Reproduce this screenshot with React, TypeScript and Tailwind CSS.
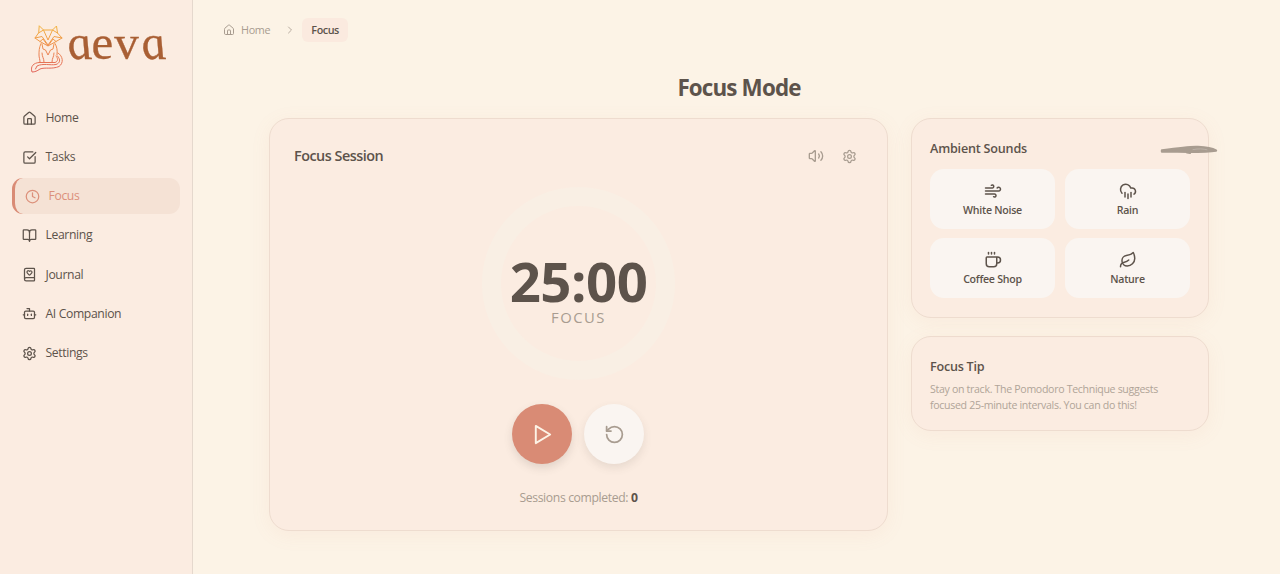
import { useState } from "react";
import {
  BookHeart,
  BookOpen,
  Bot,
  ChevronRight,
  Clock,
  CloudRain,
  Coffee,
  House,
  Leaf,
  RotateCcw,
  Settings,
  SquareCheckBig,
  Volume2,
  Wind,
} from "lucide-react";
import clsx from "clsx";

const navItems = [
  { label: "Home", icon: House },
  { label: "Tasks", icon: SquareCheckBig },
  { label: "Focus", icon: Clock },
  { label: "Learning", icon: BookOpen },
  { label: "Journal", icon: BookHeart },
  { label: "AI Companion", icon: Bot },
  { label: "Settings", icon: Settings },
];

const sounds = [
  { label: "White Noise", icon: Wind },
  { label: "Rain", icon: CloudRain },
  { label: "Coffee Shop", icon: Coffee },
  { label: "Nature", icon: Leaf },
];

function FoxLogo() {
  return (
    <svg
      viewBox="0 0 34 50"
      className="h-[50px] w-[34px] shrink-0"
      fill="none"
      stroke="url(#fox)"
      strokeWidth="1"
      strokeLinejoin="round"
      strokeLinecap="round"
    >
      <defs>
        <linearGradient id="fox" x1="0" y1="0" x2="0" y2="50" gradientUnits="userSpaceOnUse">
          <stop offset="0" stopColor="#f2b63c" />
          <stop offset="0.45" stopColor="#ee8f50" />
          <stop offset="1" stopColor="#e0605a" />
        </linearGradient>
      </defs>
      {/* head */}
      <path d="M9.5 2 L13.5 6 H22.5 L26.5 2 L27.5 9 L32 14 L26 17.5 L18 22 L10 17.5 L5 14 L8.5 9 Z" />
      <path d="M8.5 9 L13.5 6 L18 16 L22.5 6 L27.5 9" />
      <path d="M5 14 L12 12.5 L18 21 L24 12.5 L32 14" />
      <path d="M10 17.5 L13 15 L18 22 L23 15 L26 17.5" />
      {/* body */}
      <path d="M11 19.5 C9 24 9 27 9 31 C9 34 10 35 10 38 M25 19.5 C27 23 27.5 26 27 31" />
      <path d="M12 20 L13 25 L15.5 26 L18 31 L20.5 26 L23 25 L24 20" />
      <path d="M12 29 C12 33 14 34 14 38 M24 29 C24 33 22 34 22 38" />
      {/* tail */}
      <path d="M28 29 C33 32 34 39 29 42.5 C22 45.5 15 43 10 45 C7 47 5 48 2 48 C0 42 4 39 9 38.5 H25 C28.5 37.5 28 34 26 32" />
      <path d="M27.5 32 C31 36 30 39 26 40.5 C20 41.5 13 39 7 42 L5.5 45" />
    </svg>
  );
}

function Sidebar() {
  return (
    <aside className="flex w-[193px] shrink-0 flex-col border-r border-[#e5d8cd] bg-[#fbece1]">
      <div className="flex h-[100px] pl-[30px] pt-6">
        <FoxLogo />
        <div className="ml-[2px] mt-[-10px] whitespace-nowrap font-['Liberation_Serif',serif] text-[49px] leading-[57px] tracking-[1px] text-[#a95f34] [-webkit-text-stroke:0.3px_#a95f34]">
          <span className="inline-block skew-x-[15deg] italic">a</span>ev
          <span className="inline-block skew-x-[15deg] italic">a</span>
        </div>
      </div>
      <nav className="flex flex-col gap-[3.2px] px-3">
        {navItems.map(({ label, icon: Icon }) => (
          <a
            key={label}
            className={clsx(
              "flex h-9 items-center gap-[9px] rounded-[11px] px-[9.5px] text-[12.2px] tracking-[-0.37px]",
              label === "Focus"
                ? "border-l-[3px] border-[#d98b75] bg-[#f5e2d5] text-[#dc907b]"
                : "text-[#5d534b]",
            )}
          >
            <Icon className="size-[15px]" strokeWidth={2} />
            {label}
          </a>
        ))}
      </nav>
    </aside>
  );
}

function Breadcrumb() {
  return (
    <div className="flex h-6 items-center text-[10.8px]">
      <div className="flex items-center gap-[6px] text-[#a89c90]">
        <House className="size-3" />
        <span className="tracking-[-0.3px]">Home</span>
      </div>
      <ChevronRight className="ml-[14px] mr-[6px] size-3 text-[#b8aca0]" />
      <span className="flex h-6 items-center rounded-md bg-[#fbeadf] px-[9px] pt-px font-semibold tracking-[-0.45px] text-[#5d534b]">
        Focus
      </span>
    </div>
  );
}

function FocusSession() {
  const [running, setRunning] = useState(false);

  return (
    <section className="flex h-[413px] w-[619px] flex-col rounded-[20px] border border-[#eedccf] bg-[#fbece1] px-6 shadow-[0_4px_20px_rgba(217,139,117,0.08)]">
      <div className="mt-[25px] flex h-6 items-center justify-between">
        <h2 className="text-[14.4px] font-semibold tracking-[-0.5px]">Focus Session</h2>
        <div className="flex items-center gap-[18px] pr-[6px] text-[#a89c90]">
          <Volume2 className="size-4" />
          <Settings className="size-[15px]" />
        </div>
      </div>

      <div className="mt-[19px] flex size-[193px] flex-col items-center self-center rounded-full border-[19px] border-[#f9efe4]">
        <div className="mt-[48px] text-[54.5px] font-bold leading-[54px] tracking-[-0.5px]">25:00</div>
        <div className="mt-[-1px] text-[14.8px] leading-5 tracking-[1.5px] text-[#a89c90]">FOCUS</div>
      </div>

      <div className="mr-[1px] mt-6 flex justify-center gap-3">
        <button
          onClick={() => setRunning(!running)}
          className="flex size-[60px] items-center justify-center rounded-full bg-[#d98b75] text-[#fdf3e6] shadow-[0_4px_8px_rgba(93,83,75,0.16)]"
        >
          <svg
            viewBox="0 0 24 24"
            className="size-[23px]"
            fill="none"
            stroke="currentColor"
            strokeWidth="2"
            strokeLinejoin="round"
          >
            <polygon points="5 3 20 12 5 21" />
          </svg>
        </button>
        <button
          onClick={() => setRunning(false)}
          className="flex size-[60px] items-center justify-center rounded-full bg-[#faf5f1] text-[#a89c90] shadow-[0_4px_8px_rgba(93,83,75,0.12)]"
        >
          <RotateCcw className="size-[21px]" />
        </button>
      </div>

      <p className="mt-[25px] text-center text-[12.2px] leading-[18px] tracking-[-0.36px] text-[#a89c90]">
        Sessions completed: <span className="font-bold text-[#5d534b]">0</span>
      </p>
    </section>
  );
}

function AmbientSounds() {
  return (
    <section className="relative h-[200px] rounded-[20px] border border-[#eedccf] bg-[#fbece1] px-[18px] shadow-[0_4px_20px_rgba(217,139,117,0.08)]">
      <h3 className="mt-5 text-[12.6px] font-semibold leading-5 tracking-[-0.2px]">Ambient Sounds</h3>
      <div className="mt-[10.4px] grid grid-cols-2 gap-x-[10px] gap-y-[9px]">
        {sounds.map(({ label, icon: Icon }) => (
          <button
            key={label}
            className="flex h-[60px] flex-col items-center rounded-[14px] bg-[#faf5f1] pt-[12.5px]"
          >
            <Icon className="size-[18px]" />
            <span className="mt-[2px] text-[10.6px] font-semibold leading-4 tracking-[-0.25px]">{label}</span>
          </button>
        ))}
      </div>
      {/* brush stroke spilling over the card edge */}
      <svg
        viewBox="0 0 58 10"
        className="absolute -right-[10px] top-[26px] h-[10px] w-[58px]"
        fill="none"
        stroke="#a89c90"
        strokeLinecap="round"
        strokeLinejoin="round"
      >
        <path d="M2 5.5 C16 3.5 30 1.5 38 2 C46 2.5 52 3.5 56 5.5 C44 7.5 22 6.5 2 6.5Z" fill="#a89c90" strokeWidth="2.4" />
        <path d="M27 7.6 L30 8" strokeWidth="2" />
        <path d="M33 4.6 C39 3.4 43 3.8 47 4.8" stroke="#bcb1a7" strokeWidth="1" />
      </svg>
    </section>
  );
}

function FocusTip() {
  return (
    <section className="h-[95px] rounded-[20px] border border-[#eedccf] bg-[#fbece1] px-[18px] shadow-[0_4px_20px_rgba(217,139,117,0.08)]">
      <h3 className="mt-5 text-[12.6px] font-semibold leading-5 tracking-[-0.25px]">Focus Tip</h3>
      <p className="mt-[5px] whitespace-nowrap text-[10.6px] leading-[15.5px] tracking-[-0.32px] text-[#b0a498]">
        Stay on track. The Pomodoro Technique suggests
        <br />
        focused 25-minute intervals. You can do this!
      </p>
    </section>
  );
}

export default function App() {
  return (
    <div className="flex h-[574px] w-[1280px] overflow-hidden bg-[#fcf3e6] font-['Open_Sans','Noto_Sans',sans-serif] text-[#5d534b]">
      <Sidebar />
      <main className="flex-1 pl-[30px] pt-[18px]">
        <Breadcrumb />
        <div className="ml-[46px] mt-[31px] w-[940px]">
          <h1 className="text-center text-[22.4px] font-bold leading-[30px] tracking-[-0.85px]">Focus Mode</h1>
          <div className="mt-[15px] flex justify-between">
            <FocusSession />
            <div className="flex w-[298px] flex-col gap-[18px]">
              <AmbientSounds />
              <FocusTip />
            </div>
          </div>
        </div>
      </main>
    </div>
  );
}
